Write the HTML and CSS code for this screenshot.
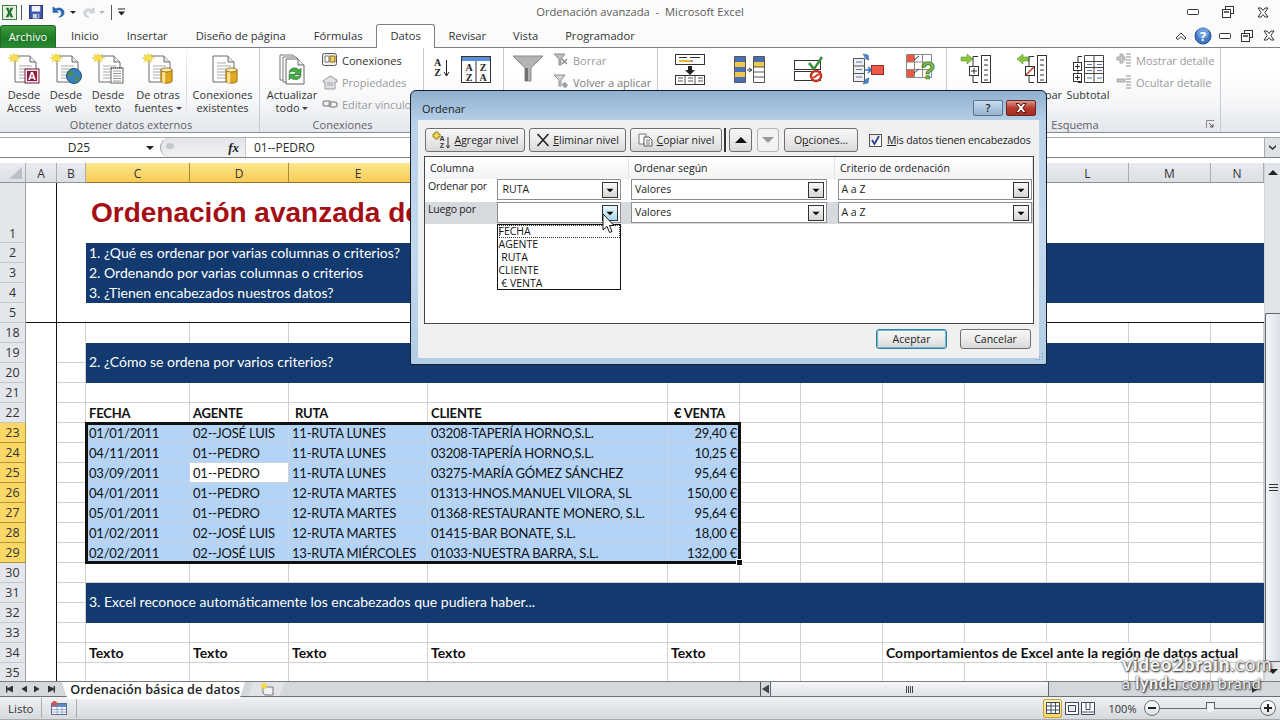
FILE: index.html
```html
<!DOCTYPE html>
<html lang="es">
<head>
    <meta charset="UTF-8">
    <title>Ordenación avanzada - Microsoft Excel</title>
    <link rel="stylesheet" href="styles.css">
</head>
<body>

<!-- Shared icon parts -->
<svg class="defs" width="0" height="0">
    <defs>
        <symbol id="doc" viewBox="0 0 32 32">
            <path d="M7 3h15l6 6v20H7z" fill="#fff" stroke="#6b6b6b"/>
            <path d="M22 3v6h6" fill="#e8e8e8" stroke="#6b6b6b"/>
            <path d="M11 13h13M11 16h13M11 19h13M11 22h13M11 25h13" stroke="#a9a9a9"/>
            <path d="M6 0l1 3 3-2-1 3 4 1-4 1 1 3-3-2-1 3-1-3-3 2 1-3-3-1 3-1-1-3 3 2z" fill="#f4e04d" stroke="#e3c84a" stroke-width=".5"/>
        </symbol>
        <symbol id="page" viewBox="0 0 32 32">
            <path d="M6 3h15l6 6v20H6z" fill="#fff" stroke="#6b6b6b"/>
            <path d="M21 3v6h6" fill="#e8e8e8" stroke="#6b6b6b"/>
            <path d="M10 10h9M10 13h14M10 16h14M10 19h14M10 22h14M10 25h14" stroke="#a9a9a9"/>
        </symbol>
        <symbol id="db" viewBox="0 0 14 18">
            <path d="M1 3v12c0 3 12 3 12 0V3z" fill="#e3a91e" stroke="#8f6a10"/>
            <path d="M4 4v13" stroke="#f8e6a0" stroke-width="3"/>
            <ellipse cx="7" cy="3" rx="6" ry="2.2" fill="#f7e9b3" stroke="#8f6a10"/>
        </symbol>
        <symbol id="combo-arrow" viewBox="0 0 16 16">
            <path d="M4 6.500h8L8 10.500z" fill="#000"/>
        </symbol>
    </defs>
</svg>

<div class="app">

    <!-- Title bar -->
    <div class="titlebar">
        <div class="qat">
            <svg class="qat-logo" viewBox="0 0 16 16"><rect x=".5" y=".5" width="15" height="15" fill="#e6f1df" stroke="#2f7a3a"/><path d="M4 3h3l1 3 1-3h3l-2.500 5L12 13H9L8 10l-1 3H4l2.500-5z" fill="#1f6e2e"/></svg>
            <span class="qat-sep"></span>
            <svg class="qat-save" viewBox="0 0 15 15"><path d="M.5.500h14v14H.5z" fill="#3d54a8" stroke="#1e2a66"/><rect x="3" y="1" width="9" height="6" fill="#eef2fb"/><rect x="4" y="9.500" width="7" height="5" fill="#c9d0e4"/><rect x="8.500" y="10" width="1.500" height="3.500" fill="#3d54a8"/></svg>
            <svg class="qat-undo" viewBox="0 0 15 15"><path d="M1 2v6h6L5 6c3-1.500 5 0 5 3 0 2-1 3-3 4 4 0 6-2 6-5 0-4-5-6-9-4z" fill="#2d6cc0" stroke="#1b4a8c" stroke-width=".5"/></svg>
            <span class="qat-drop"></span>
            <svg class="qat-redo" viewBox="0 0 15 15"><path d="M14 2v6H8l2-2C7 4.500 5 6 5 9c0 2 1 3 3 4-4 0-6-2-6-5 0-4 5-6 9-4z" fill="#d5dbdf" stroke="#a7aeb2" stroke-width=".5"/></svg>
            <span class="qat-drop is-off"></span>
            <span class="qat-sep is-far"></span>
            <svg class="qat-custom" viewBox="0 0 9 8"><path d="M1 1h7" stroke="#222"/><path d="M1 3.500h7L4.500 7.500z" fill="#222"/></svg>
        </div>
        <div class="title-text">Ordenación avanzada  -  Microsoft Excel</div>
        <div class="win-buttons">
            <button class="win-btn"><svg width="12" height="6" viewBox="0 0 12 6"><rect x=".5" y=".5" width="11" height="5" rx="1" fill="#fff" stroke="#333"/></svg></button>
            <button class="win-btn"><svg width="12" height="12" viewBox="0 0 12 12"><rect x="3.500" y=".5" width="8" height="7" fill="#fff" stroke="#333"/><rect x=".5" y="3.500" width="8" height="8" fill="#fff" stroke="#333"/><path d="M2 6h5" stroke="#333" stroke-width="1.500"/></svg></button>
            <button class="win-btn"><svg width="12" height="11" viewBox="0 0 12 11"><path d="M1 1h3l2 2.500L8 1h3L7.800 5.500 11 10H8L6 7.500 4 10H1l3.200-4.500z" fill="#fff" stroke="#333"/></svg></button>
        </div>
    </div>

    <!-- Ribbon tabs -->
    <div class="tabs">
        <div class="tab-file">Archivo</div>
        <div class="tab">Inicio</div>
        <div class="tab">Insertar</div>
        <div class="tab">Diseño de página</div>
        <div class="tab">Fórmulas</div>
        <div class="tab is-active">Datos</div>
        <div class="tab">Revisar</div>
        <div class="tab">Vista</div>
        <div class="tab">Programador</div>
        <div class="doc-buttons">
            <button class="doc-btn"><svg width="12" height="8" viewBox="0 0 12 8"><path d="M1 6l5-5 5 5-2 1.500-3-3-3 3z" fill="#fff" stroke="#333"/></svg></button>
            <button class="doc-btn"><svg width="18" height="18" viewBox="0 0 18 18"><circle cx="9" cy="9" r="8" fill="#3f78c8" stroke="#24508f"/><circle cx="9" cy="6" r="6" fill="#8db5e8" opacity=".6"/><text x="9" y="13.500" class="help-mark">?</text></svg></button>
            <button class="doc-btn"><svg width="12" height="6" viewBox="0 0 12 6"><rect x=".5" y=".5" width="11" height="5" rx="1" fill="#fff" stroke="#333"/></svg></button>
            <button class="doc-btn"><svg width="12" height="12" viewBox="0 0 12 12"><rect x="3.500" y=".5" width="8" height="7" fill="#fff" stroke="#333"/><rect x=".5" y="3.500" width="8" height="8" fill="#fff" stroke="#333"/><path d="M2 6h5" stroke="#333" stroke-width="1.500"/></svg></button>
            <button class="doc-btn"><svg width="12" height="11" viewBox="0 0 12 11"><path d="M1 1h3l2 2.500L8 1h3L7.800 5.500 11 10H8L6 7.500 4 10H1l3.200-4.500z" fill="#fff" stroke="#333"/></svg></button>
        </div>
    </div>

    <!-- Ribbon -->
    <div class="ribbon">
        <div class="group g-external">
            <div class="group-items">
                <div class="big w42">
                    <svg class="big-icon" viewBox="0 0 32 32"><use href="#doc"/><rect x="17" y="16" width="14" height="14" fill="#fbe9ee" stroke="#7b1c38"/><rect x="19" y="18" width="10" height="10" fill="#8a1c40"/><text x="24" y="27" class="icon-letter">A</text></svg>
                    <div class="big-label">Desde<br>Access</div>
                </div>
                <div class="big w42">
                    <svg class="big-icon" viewBox="0 0 32 32"><use href="#doc"/><circle cx="24" cy="23" r="7.500" fill="#3b7fb8" stroke="#1e5480"/><path d="M20 18c3-1 4 1 3 3s-4 3-5 1zM26 24c2-1 4 0 3 2s-3 3-4 2z" fill="#4e8f3e"/></svg>
                    <div class="big-label">Desde<br>web</div>
                </div>
                <div class="big w42">
                    <svg class="big-icon" viewBox="0 0 32 32"><use href="#doc"/><rect x="19" y="15" width="12" height="15" fill="#fff" stroke="#666"/><path d="M19 15h12" stroke="#333" stroke-dasharray="1 1"/><path d="M21 18h8M21 20.500h8M21 23h8M21 25.500h8M21 28h8" stroke="#999"/></svg>
                    <div class="big-label">Desde<br>texto</div>
                </div>
                <div class="big w58">
                    <svg class="big-icon" viewBox="0 0 32 32"><use href="#doc"/><use href="#db" x="18" y="14" width="13" height="17"/></svg>
                    <div class="big-label">De otras<br>fuentes <span class="caret"></span></div>
                </div>
                <span class="inner-sep"></span>
                <div class="big w71">
                    <svg class="big-icon" viewBox="0 0 32 32"><use href="#page"/><use href="#db" x="18" y="14" width="13" height="17"/></svg>
                    <div class="big-label">Conexiones<br>existentes</div>
                </div>
            </div>
            <div class="group-label">Obtener datos externos</div>
        </div>

        <div class="group g-connections">
            <div class="group-items">
                <div class="big w60">
                    <svg class="big-icon" viewBox="0 0 32 32"><path d="M4 2h13l5 5v20H4z" fill="#fff" stroke="#777"/><path d="M7 4h13l5 5v20H7z" fill="#fff" stroke="#777"/><path d="M10 6h12l6 6v19H10z" fill="#fff" stroke="#666"/><path d="M22 6v6h6" fill="#eee" stroke="#666"/><path d="M13 20c0-5 7-7 10-3l2-2v7h-7l2-2c-2-2-4-2-7 0z" fill="#46a846" stroke="#22702a" stroke-width=".5"/><path d="M25 22c0 5-7 6-10 3l-2 2v-6h7l-2 2c2 1 4 1 7-1z" fill="#46a846" stroke="#22702a" stroke-width=".5"/></svg>
                    <div class="big-label">Actualizar<br>todo <span class="caret"></span></div>
                </div>
                <div class="small-col">
                    <div class="small"><svg class="small-icon" viewBox="0 0 16 16"><rect x=".5" y="1.500" width="14" height="12" rx="2" fill="#eef1f6" stroke="#555"/><path d="M3 4h4v6H3z" fill="#fff" stroke="#777"/><path d="M8 4h5v6H8z" fill="#f0cc6a" stroke="#8f6a10"/></svg>Conexiones</div>
                    <div class="small is-off"><svg class="small-icon" viewBox="0 0 16 16"><path d="M1 7l7-5 7 4v2h-2v7H3V8H1z" fill="#dfe1e4" stroke="#9a9a9a"/><path d="M5 9h6M5 11h6" stroke="#a5a5a5"/></svg>Propiedades</div>
                    <div class="small is-off"><svg class="small-icon" viewBox="0 0 16 16"><rect x="1" y="5" width="8" height="5" rx="2.500" fill="none" stroke="#9a9a9a" stroke-width="1.500"/><rect x="7" y="6" width="8" height="5" rx="2.500" fill="none" stroke="#9a9a9a" stroke-width="1.500"/></svg>Editar vínculos</div>
                </div>
            </div>
            <div class="group-label">Conexiones</div>
        </div>

        <div class="group g-sort">
            <div class="group-items">
                <svg class="sort-az" viewBox="0 0 18 22"><text x="4.500" y="9" class="icon-serif">A</text><text x="4.500" y="19" class="icon-serif">Z</text><path d="M13.500 3v15M11 15l2.500 4 2.500-4" fill="none" stroke="#222"/></svg>
                <svg class="sort-big" viewBox="0 0 30 27"><rect x=".5" y=".5" width="29" height="26" fill="#fff" stroke="#333"/><rect x="1" y="1" width="28" height="4" fill="#5b8fd6"/><path d="M15 5v21" stroke="#333"/><text x="8" y="15" class="icon-serif">A</text><text x="8" y="24.500" class="icon-serif">Z</text><text x="22" y="15" class="icon-serif">Z</text><text x="22" y="24.500" class="icon-serif">A</text></svg>
            </div>
        </div>

        <div class="group g-filter">
            <div class="group-items">
                <svg class="funnel" viewBox="0 0 32 28"><path d="M1 2h30L19 14v13h-6V14z" fill="#b3b3b3" stroke="#8b8b8b"/><path d="M13 14h3v13h-3z" fill="#707070"/></svg>
                <div class="small-col">
                    <div class="small is-off"><svg class="small-icon" viewBox="0 0 16 16"><path d="M1 2h11L8 7v6H6V7z" fill="#bdbdbd" stroke="#8d8d8d"/><path d="M9 7l5 5M14 7l-5 5" stroke="#8d8d8d" stroke-width="1.500"/></svg>Borrar</div>
                    <div class="small is-off is-dim"><svg class="small-icon" viewBox="0 0 16 16"><path d="M1 1h11L8 6v6H6V6z" fill="#d6d6d6" stroke="#8d8d8d"/><path d="M9 10l3-2 3 3-2 3-3-1z" fill="#9aa0a5"/></svg>Volver a aplicar</div>
                </div>
            </div>
        </div>

        <div class="group g-tools">
            <div class="group-items">
                <div class="big w59"><svg class="big-icon" viewBox="0 0 32 32"><rect x="1.500" y="1.500" width="29" height="10" fill="#fff" stroke="#333"/><path d="M5 4.500h8M16 4.500h10M5 8h14" stroke="#333"/><path d="M5 8h12" stroke="#e8b92e" stroke-width="2"/><path d="M14 13h4v4h3l-5 5-5-5h3z" fill="#222"/><rect x="1.500" y="22.500" width="29" height="9" fill="#fff" stroke="#333"/><path d="M11 23v8M21 23v8M4 25h5M14 25h5M24 25h5M4 28h5M14 28h5M24 28h5" stroke="#555"/></svg></div>
                <div class="big w59"><svg class="big-icon" viewBox="0 0 32 32"><path d="M1.500 3.500h11v26h-11zM20.500 3.500h11v26h-11z" fill="#fff" stroke="#555"/><path d="M2 4h10v5H2zM21 4h10v5H21z" fill="#4a6fb5"/><path d="M2 9h10v5H2zM2 19h10v5H2zM21 9h10v5H21z" fill="#efc94c"/><path d="M2 14h10v5H2zM2 24h10v5H2z" fill="#4a6fb5"/><path d="M14 17h4M16 15l3 2-3 2" fill="none" stroke="#333"/><path d="M21 14h10M21 19h10M21 24h10" stroke="#555"/></svg></div>
                <div class="big w59"><svg class="big-icon" viewBox="0 0 32 32"><rect x="2.500" y="7.500" width="26" height="9" fill="#fff" stroke="#333"/><rect x="2.500" y="18.500" width="26" height="9" fill="#fff" stroke="#333"/><path d="M18 9l4 5 7-11 2 2-9 13-6-7z" fill="#3a8f3e"/><circle cx="24" cy="23" r="5" fill="#fff" stroke="#c8311f" stroke-width="2.500"/><path d="M21 25l6-4" stroke="#c8311f" stroke-width="2"/></svg></div>
                <div class="big w62"><svg class="big-icon" viewBox="0 0 32 32"><path d="M1.500 5.500h11v23h-11z" fill="#eee" stroke="#555"/><path d="M1.500 13h11M1.500 20.500h11" stroke="#555"/><path d="M4 9h6M4 16.500h6M4 24h6" stroke="#5a78b8"/><rect x="19.500" y="12.500" width="12" height="9" fill="#ef5a48" stroke="#9a2a1e"/><path d="M13 17h6M16 14l3 3-3 3" fill="none" stroke="#3c6fb8" stroke-width="1.500"/><path d="M11 1l5 1 1 5-3-1zM11 31l5-1 1-5-3 1z" fill="#4a86d0" stroke="#28568f" stroke-width=".5"/></svg></div>
                <div class="big w44"><svg class="big-icon" viewBox="0 0 32 32"><path d="M1.500 1.500h25v23h-25zM1.500 9h25M1.500 16.500h25M9.500 1.500v23M17.500 1.500v23" fill="#fff" stroke="#888"/><path d="M2 2h7v7H2zM2 17h7v7H2z" fill="#e85a46"/><path d="M9 7l5-4M9 20l5-4" stroke="#333"/><text x="23" y="26" class="icon-question">?</text></svg></div>
            </div>
        </div>

        <div class="group g-outline">
            <div class="group-items">
                <div class="big w56">
                    <svg class="big-icon" viewBox="0 0 32 32"><path d="M1 4h6V1l6 5-6 5V8H1z" fill="#8cc63f" stroke="#4e8a1d" stroke-width=".5"/><path d="M18 3.500h-5v26h5" fill="none" stroke="#333"/><rect x="9.500" y="13.500" width="9" height="9" fill="#fff" stroke="#333"/><path d="M11 18h6M14 15v6" stroke="#333"/><rect x="21.500" y="2.500" width="9" height="27" fill="#fff" stroke="#333"/><path d="M24 7h4M24 12h4M24 17h4M24 22h4M24 27h4" stroke="#333"/></svg>
                    <div class="big-label">Agrupar</div>
                </div>
                <div class="big w56">
                    <svg class="big-icon" viewBox="0 0 32 32"><path d="M13 4H7V1L1 6l6 5V8h6z" fill="#8cc63f" stroke="#4e8a1d" stroke-width=".5"/><path d="M18 3.500h-5v26h5" fill="none" stroke="#333"/><rect x="9.500" y="13.500" width="9" height="9" fill="#fff" stroke="#333"/><path d="M10 22l8-8" stroke="#c8311f" stroke-width="1.500"/><rect x="21.500" y="2.500" width="9" height="27" fill="#fff" stroke="#333"/><path d="M24 7h4M24 12h4M24 17h4M24 22h4M24 27h4" stroke="#333"/></svg>
                    <div class="big-label">Desagrupar</div>
                </div>
                <div class="big w56">
                    <svg class="big-icon" viewBox="0 0 32 32"><path d="M6 3.500h4M6 29.500h4M6 3.500v26" fill="none" stroke="#333"/><rect x="1.500" y="9.500" width="8" height="8" fill="#fff" stroke="#333"/><rect x="1.500" y="20.500" width="8" height="8" fill="#fff" stroke="#333"/><path d="M3 13.500h5M5.500 11v5M3 24.500h5M5.500 22v5" stroke="#333"/><path d="M12.500 2.500h19v27h-19zM12.500 8.500h19M12.500 14.500h19M12.500 20.500h19M22 2.500v27" fill="#fff" stroke="#444"/><path d="M15 11.500h5M25 11.500h5M15 17.500h5M25 17.500h5M15 25h5M25 25h5" stroke="#5a78b8"/></svg>
                    <div class="big-label">Subtotal</div>
                </div>
                <div class="small-col">
                    <div class="small is-off"><svg class="small-icon" viewBox="0 0 16 16"><path d="M1 5h3V2h3v3h2v3H7v3H4V8H1z" fill="#c7c7c7" stroke="#a8a8a8"/><path d="M10 2h5M10 5h5M10 8h5M10 11h5M10 14h5" stroke="#8f8f8f"/></svg>Mostrar detalle</div>
                    <div class="small is-off"><svg class="small-icon" viewBox="0 0 16 16"><path d="M1 5h8v3H1z" fill="#c7c7c7" stroke="#a8a8a8"/><path d="M10 2h5M10 5h5M10 8h5M10 11h5M10 14h5" stroke="#8f8f8f"/></svg>Ocultar detalle</div>
                </div>
            </div>
            <div class="group-label">Esquema</div>
            <svg class="launcher" viewBox="0 0 9 9"><path d="M.5 8V.5H8" fill="none" stroke="#888"/><path d="M3 3l4 4M7 4v3H4" fill="none" stroke="#555"/></svg>
        </div>
    </div>

    <!-- Formula bar -->
    <div class="formula-bar">
        <div class="name-box">D25<span class="name-arrow"></span></div>
        <div class="fx-box"><span class="fx-pill"></span><span class="fx">fx</span></div>
        <div class="formula-input">01--PEDRO</div>
        <div class="formula-expand"><svg width="9" height="7" viewBox="0 0 9 7"><path d="M1 1l3.500 3L8 1v2L4.500 6 1 3z" fill="#333"/></svg></div>
    </div>

    <!-- Sheet -->
    <div class="sheet-area">
        <div class="sheet">
            <table class="grid">
                <colgroup>
                    <col class="c-hd"><col class="c-a"><col class="c-b"><col class="c-c"><col class="c-d"><col class="c-e"><col class="c-f"><col class="c-g"><col class="c-h"><col class="c-i"><col class="c-i"><col class="c-i"><col class="c-i"><col class="c-i"><col class="c-n">
                </colgroup>
                <thead>
                    <tr class="col-heads">
                        <th class="corner"><svg width="14" height="14" viewBox="0 0 14 14"><path d="M14 1v12H1z" fill="#bcc1c8"/></svg></th>
                        <th>A</th><th>B</th><th class="is-sel">C</th><th class="is-sel">D</th><th class="is-sel">E</th><th class="is-sel">F</th><th class="is-sel">G</th><th>H</th><th>I</th><th>J</th><th>K</th><th>L</th><th>M</th><th>N</th>
                    </tr>
                </thead>
                <tbody>
                    <tr class="plain tall"><th>1</th><td class="col-a"></td><td></td><td colspan="12" class="sheet-title">Ordenación avanzada de datos</td></tr>
                    <tr class="plain"><th>2</th><td class="col-a"></td><td></td><td colspan="12" class="band">1. ¿Qué es ordenar por varias columnas o criterios?</td></tr>
                    <tr class="plain"><th>3</th><td class="col-a"></td><td></td><td colspan="12" class="band">2. Ordenando por varias columnas o criterios</td></tr>
                    <tr class="plain"><th>4</th><td class="col-a"></td><td></td><td colspan="12" class="band">3. ¿Tienen encabezados nuestros datos?</td></tr>
                    <tr class="plain freeze"><th>5</th><td class="col-a"></td><td></td><td colspan="12"></td></tr>
                    <tr class="no-bottom"><th>18</th><td class="col-a"></td><td></td><td></td><td></td><td></td><td></td><td></td><td></td><td></td><td></td><td></td><td></td><td></td><td></td></tr>
                    <tr><th>19</th><td class="col-a"></td><td></td><td colspan="12" rowspan="2" class="band is-double">2. ¿Cómo se ordena por varios criterios?</td></tr>
                    <tr><th>20</th><td class="col-a"></td><td></td></tr>
                    <tr><th>21</th><td class="col-a"></td><td></td><td></td><td></td><td></td><td></td><td></td><td></td><td></td><td></td><td></td><td></td><td></td><td></td></tr>
                    <tr class="heads"><th>22</th><td class="col-a"></td><td></td><td>FECHA</td><td>AGENTE</td><td>&nbsp;RUTA</td><td>CLIENTE</td><td>&nbsp;€ VENTA</td><td></td><td></td><td></td><td></td><td></td><td></td><td></td></tr>
                    <tr class="data"><th>23</th><td class="col-a"></td><td></td><td class="s">01/01/2011</td><td class="s">02--JOSÉ LUIS</td><td class="s">11-RUTA LUNES</td><td class="s">03208-TAPERÍA HORNO,S.L.</td><td class="s num">29,40 €</td><td></td><td></td><td></td><td></td><td></td><td></td><td></td></tr>
                    <tr class="data"><th>24</th><td class="col-a"></td><td></td><td class="s">04/11/2011</td><td class="s">01--PEDRO</td><td class="s">11-RUTA LUNES</td><td class="s">03208-TAPERÍA HORNO,S.L.</td><td class="s num">10,25 €</td><td></td><td></td><td></td><td></td><td></td><td></td><td></td></tr>
                    <tr class="data"><th>25</th><td class="col-a"></td><td></td><td class="s">03/09/2011</td><td class="active">01--PEDRO</td><td class="s">11-RUTA LUNES</td><td class="s">03275-MARÍA GÓMEZ SÁNCHEZ</td><td class="s num">95,64 €</td><td></td><td></td><td></td><td></td><td></td><td></td><td></td></tr>
                    <tr class="data"><th>26</th><td class="col-a"></td><td></td><td class="s">04/01/2011</td><td class="s">01--PEDRO</td><td class="s">12-RUTA MARTES</td><td class="s">01313-HNOS.MANUEL VILORA, SL</td><td class="s num">150,00 €</td><td></td><td></td><td></td><td></td><td></td><td></td><td></td></tr>
                    <tr class="data"><th>27</th><td class="col-a"></td><td></td><td class="s">05/01/2011</td><td class="s">01--PEDRO</td><td class="s">12-RUTA MARTES</td><td class="s">01368-RESTAURANTE MONERO, S.L.</td><td class="s num">95,64 €</td><td></td><td></td><td></td><td></td><td></td><td></td><td></td></tr>
                    <tr class="data"><th>28</th><td class="col-a"></td><td></td><td class="s">01/02/2011</td><td class="s">02--JOSÉ LUIS</td><td class="s">12-RUTA MARTES</td><td class="s">01415-BAR BONATE, S.L.</td><td class="s num">18,00 €</td><td></td><td></td><td></td><td></td><td></td><td></td><td></td></tr>
                    <tr class="data"><th>29</th><td class="col-a"></td><td></td><td class="s">02/02/2011</td><td class="s">02--JOSÉ LUIS</td><td class="s">13-RUTA MIÉRCOLES</td><td class="s">01033-NUESTRA BARRA, S.L.</td><td class="s num">132,00 €</td><td></td><td></td><td></td><td></td><td></td><td></td><td></td></tr>
                    <tr><th>30</th><td class="col-a"></td><td></td><td></td><td></td><td></td><td></td><td></td><td></td><td></td><td></td><td></td><td></td><td></td><td></td></tr>
                    <tr><th>31</th><td class="col-a"></td><td></td><td colspan="12" rowspan="2" class="band is-double">3. Excel reconoce automáticamente los encabezados que pudiera haber...</td></tr>
                    <tr><th>32</th><td class="col-a"></td><td></td></tr>
                    <tr><th>33</th><td class="col-a"></td><td></td><td></td><td></td><td></td><td></td><td></td><td></td><td></td><td></td><td></td><td></td><td></td><td></td></tr>
                    <tr class="heads is-mixed"><th>34</th><td class="col-a"></td><td></td><td>Texto</td><td>Texto</td><td>Texto</td><td>Texto</td><td>Texto</td><td></td><td></td><td colspan="5" class="note">Comportamientos de Excel ante la región de datos actual</td></tr>
                    <tr><th>35</th><td class="col-a"></td><td></td><td></td><td></td><td></td><td></td><td></td><td></td><td></td><td></td><td></td><td></td><td></td><td></td></tr>
                </tbody>
            </table>
            <div class="sel-box"><span class="sel-handle"></span></div>
        </div>
        <div class="vscroll">
            <div class="scroll-up"></div>
            <div class="vthumb"><span class="grip-h"></span></div>
            <div class="scroll-down"></div>
        </div>
    </div>

    <!-- Sheet tabs -->
    <div class="sheet-tabs">
        <div class="tab-nav">
            <span class="nav first"></span><span class="nav prev"></span><span class="nav next"></span><span class="nav last"></span>
        </div>
        <div class="sheet-tab">Ordenación básica de datos</div>
        <div class="new-tab"><svg width="16" height="14" viewBox="0 0 16 14"><path d="M4 5h10v8H6l-2-2z" fill="#eef1f6" stroke="#777"/><path d="M5 0l1 2 2-1-1 2 2 1-2 1 1 2-2-1-1 2-1-2-2 1 1-2-2-1 2-1-1-2 2 1z" fill="#f4d94a"/></svg></div>
        <div class="tab-split"></div>
        <div class="hscroll">
            <span class="hleft"></span>
            <div class="hthumb"><span class="grip-v"></span></div>
            <span class="hright"></span>
        </div>
    </div>

    <!-- Status bar -->
    <div class="statusbar">
        <div class="status-text">Listo</div>
        <span class="status-sep"></span>
        <div class="status-macro"><svg width="16" height="14" viewBox="0 0 16 14"><rect x=".5" y="2.500" width="15" height="11" fill="#fff" stroke="#5b6f8c"/><rect x="1" y="3" width="14" height="3" fill="#5f8ac4"/><path d="M1 8.500h14M1 11h14M6 6v7M11 6v7" stroke="#8fa6c4"/><circle cx="3.500" cy="2.500" r="2.500" fill="#d9534a"/></svg></div>
        <span class="status-sep"></span>
        <div class="status-right">
            <span class="view is-on"><svg width="14" height="12" viewBox="0 0 14 12"><path d="M.5.500h13v11H.5zM.5 4h13M.5 8h13M5 .5v11M9.500.5v11" fill="#fff" stroke="#3e4a5c"/></svg></span>
            <span class="view"><svg width="14" height="13" viewBox="0 0 14 13"><rect x=".5" y=".5" width="13" height="12" fill="#fff" stroke="#3e4a5c"/><rect x="3.500" y="3.500" width="7" height="6" fill="#e7eaf0" stroke="#3e4a5c"/></svg></span>
            <span class="view"><svg width="14" height="13" viewBox="0 0 14 13"><path d="M.5.500h13v12H.5z" fill="#fff" stroke="#3e4a5c"/><path d="M5 .5v7h4V.5M.5 10h13" fill="none" stroke="#3e4a5c"/></svg></span>
            <span class="zoom-val">100%</span>
            <span class="zoom-btn"><span class="zoom-minus"></span></span>
            <div class="slider"><span class="slider-thumb"></span></div>
            <span class="zoom-btn"><span class="zoom-minus"></span><span class="zoom-vert"></span></span>
        </div>
    </div>

    <!-- Sort dialog -->
    <div class="dialog">
        <div class="dialog-title">
            <span>Ordenar</span>
            <div class="dialog-win">
                <button class="dlg-help">?</button>
                <button class="dlg-close"><svg width="14" height="10" viewBox="0 0 14 10"><path d="M2 .5h3l2 2.500L9 .5h3L8.800 5 12 9.500H9L7 7 5 9.500H2L5.200 5z" fill="#fff" stroke="#5a1a14"/></svg></button>
            </div>
        </div>
        <div class="dialog-body">
            <div class="dlg-toolbar">
                <button class="btn w-add"><svg width="20" height="18" viewBox="0 0 20 18"><path d="M3 1h3v2h2v3H6v2H3V6H1V3h2z" fill="#f4dc5a" stroke="#9a8420"/><text x="10" y="10" class="mini-az">A</text><text x="10" y="17" class="mini-az">Z</text><path d="M16 6v11M14.500 14.500l1.500 2.500 1.500-2.500" fill="none" stroke="#333"/></svg><span><u>A</u>gregar nivel</span></button>
                <button class="btn w-del"><svg width="14" height="14" viewBox="0 0 14 14"><path d="M1.500 1l11 12M12.500 1l-11 12" stroke="#222" stroke-width="1.600"/></svg><span><u>E</u>liminar nivel</span></button>
                <button class="btn w-copy"><svg width="16" height="14" viewBox="0 0 16 14"><path d="M1 1h7v10H1z" fill="#fff" stroke="#777"/><path d="M6 4h5l3 3v6H6z" fill="#fff" stroke="#555"/><path d="M8 7h4M8 9h4M8 11h4" stroke="#777"/></svg><span><u>C</u>opiar nivel</span></button>
                <span class="tool-sep"></span>
                <button class="btn w-up"><span class="tri-up"></span></button>
                <button class="btn w-down is-off"><span class="tri-down"></span></button>
                <button class="btn w-opt"><span>O<u>p</u>ciones...</span></button>
                <label class="has-head"><span class="check"><svg width="11" height="11" viewBox="0 0 11 11"><path d="M2 5l2.500 4L9 1" fill="none" stroke="#27408b" stroke-width="1.800"/></svg></span><span><u>M</u>is datos tienen encabezados</span></label>
            </div>

            <div class="levels">
                <div class="levels-head">
                    <div>Columna</div>
                    <div>Ordenar según</div>
                    <div>Criterio de ordenación</div>
                </div>
                <div class="level">
                    <div class="level-label">Ordenar por</div>
                    <div class="combo"><span class="combo-text">RUTA</span><span class="combo-btn"><svg width="14" height="14"><use href="#combo-arrow"/></svg></span></div>
                    <div class="combo is-tight"><span class="combo-text">Valores</span><span class="combo-btn"><svg width="14" height="14"><use href="#combo-arrow"/></svg></span></div>
                    <div class="combo is-tight"><span class="combo-text">A a Z</span><span class="combo-btn"><svg width="14" height="14"><use href="#combo-arrow"/></svg></span></div>
                </div>
                <div class="level is-selected">
                    <div class="level-label">Luego por</div>
                    <div class="combo is-open">
                        <span class="combo-text"></span><span class="combo-btn is-hover"><svg width="14" height="14"><use href="#combo-arrow"/></svg></span>
                        <div class="combo-list">
                            <div class="is-focus">FECHA</div>
                            <div>AGENTE</div>
                            <div>&nbsp;RUTA</div>
                            <div>CLIENTE</div>
                            <div>&nbsp;€ VENTA</div>
                        </div>
                    </div>
                    <div class="combo is-tight"><span class="combo-text">Valores</span><span class="combo-btn"><svg width="14" height="14"><use href="#combo-arrow"/></svg></span></div>
                    <div class="combo is-tight"><span class="combo-text">A a Z</span><span class="combo-btn"><svg width="14" height="14"><use href="#combo-arrow"/></svg></span></div>
                </div>
            </div>

            <div class="dlg-actions">
                <button class="btn btn-action is-default">Aceptar</button>
                <button class="btn btn-action">Cancelar</button>
            </div>
            <svg class="size-grip" width="10" height="10" viewBox="0 0 10 10"><path d="M8 1h1v1H8zM5 4h1v1H5zM8 4h1v1H8zM2 7h1v1H2zM5 7h1v1H5zM8 7h1v1H8z" fill="#8a96a5"/></svg>
        </div>
    </div>

    <!-- Mouse pointer -->
    <svg class="pointer" width="13" height="21" viewBox="0 0 13 21"><path d="M1 1v16l4-3.500 2.500 6 2.500-1-2.500-6H12z" fill="#fff" stroke="#111"/></svg>

    <!-- Video watermark -->
    <div class="watermark">
        <div class="wm-top"><b>video2brain</b>.com</div>
        <div class="wm-bottom">a <b>lynda</b>.com brand</div>
    </div>
</div>

</body>
</html>
```

FILE: styles.css
```css
* {
    box-sizing: border-box;
}
html, body {
    margin: 0;
    height: 100%;
    overflow: hidden;
    background-color: #fff;
}
body {
    font-family: 'Open Sans', 'Liberation Sans', sans-serif;
    font-size: 11px;
    color: #2b2b2b;
}
button {
    font: inherit;
    color: inherit;
    padding: 0;
}
.defs {
    position: absolute;
}
.app {
    position: relative;
    width: 1280px;
    height: 720px;
    display: flex;
    flex-direction: column;
    overflow: hidden;
}

/* Title bar */
.titlebar {
    height: 24px;
    flex: none;
    display: grid;
    grid-template-columns: 1fr auto 1fr;
    align-items: center;
    background-color: #fbfbfc;
}
.qat {
    display: flex;
    align-items: center;
    padding-left: 2px;
}
.qat-logo {
    width: 15px;
    height: 15px;
}
.qat-sep {
    width: 1px;
    height: 15px;
    margin: 0 7px 0 4px;
    background-color: #555;
}
.qat-sep.is-far {
    margin: 0 5px 0 6px;
}
.qat-save {
    width: 14px;
    height: 14px;
}
.qat-undo {
    width: 14px;
    height: 14px;
    margin-left: 9px;
}
.qat-redo {
    width: 13px;
    height: 13px;
    margin-left: 6px;
}
.qat-drop {
    width: 0;
    height: 0;
    margin-left: 4px;
    border-left: 3px solid transparent;
    border-right: 3px solid transparent;
    border-top: 3px solid #222;
}
.qat-drop.is-off {
    border-top-color: #b5b5b5;
}
.qat-custom {
    width: 9px;
    height: 8px;
}
.title-text {
    font-size: 11.2px;
    color: #5b5b5b;
    white-space: pre;
    padding-bottom: 2px;
}
.win-buttons {
    display: flex;
    justify-content: flex-end;
}
.win-btn {
    width: 35px;
    height: 22px;
    border: none;
    background: none;
    display: flex;
    align-items: center;
    justify-content: center;
}

/* Ribbon tabs */
.tabs {
    height: 24px;
    flex: none;
    display: flex;
    align-items: flex-end;
    position: relative;
    background-color: #fbfbfc;
    border-bottom: 1px solid #7d7f82;
}
.tab-file {
    width: 56px;
    height: 23px;
    margin-bottom: -1px;
    border-radius: 3px 3px 0 0;
    border: 1px solid #1f6a29;
    border-bottom: none;
    background: linear-gradient(#3f9a3f, #1f7a25 55%, #2f8a35);
    color: #fff;
    font-size: 11px;
    text-align: center;
    line-height: 21px;
}
.tab {
    height: 23px;
    margin-bottom: -1px;
    padding: 0 13px;
    border: 1px solid transparent;
    border-bottom: none;
    font-size: 11.2px;
    line-height: 20px;
    color: #333;
}
.tab-file + .tab {
    margin-left: 1px;
}
.tab.is-active {
    background-color: #fff;
    border-color: #7d7f82;
    border-radius: 3px 3px 0 0;
    height: 24px;
    line-height: 21px;
}
.tab.is-active ~ .tab {
    padding: 0 12.5px;
}
.doc-buttons {
    margin-left: auto;
    height: 23px;
    display: flex;
}
.doc-btn {
    width: 22px;
    border: none;
    background: none;
    display: flex;
    align-items: center;
    justify-content: center;
}
.help-mark {
    font: bold 13px 'Open Sans', sans-serif;
    fill: #fff;
    text-anchor: middle;
}

/* Ribbon */
.ribbon {
    height: 85px;
    flex: none;
    display: flex;
    background: linear-gradient(#ffffff 30%, #f5f6f8 65%, #e4e7ec);
    border-bottom: 1px solid #8a8d91;
}
.group {
    display: flex;
    flex-direction: column;
    border-right: 1px solid #c6c9ce;
    position: relative;
}
.g-external { width: 260px; padding-left: 3px; }
.g-connections { width: 164px; padding-left: 2px; }
.g-sort { width: 80px; }
.g-filter { width: 154px; }
.g-tools { width: 289px; padding-left: 2px; }
.g-outline { width: 274px; padding-left: 1px; }
.group-items {
    flex: 1;
    display: flex;
    min-height: 0;
}
.group-label {
    height: 15px;
    flex: none;
    text-align: center;
    font-size: 11px;
    line-height: 15px;
    color: #5e6166;
}
.g-outline .group-label {
    padding-right: 18px;
}
.launcher {
    position: absolute;
    right: 5px;
    bottom: 3px;
    width: 9px;
    height: 9px;
}
.big {
    flex: none;
    display: flex;
    flex-direction: column;
    align-items: center;
    padding-top: 5px;
}
.w42 { width: 42px; }
.w44 { width: 44px; }
.w56 { width: 56px; }
.w58 { width: 58px; }
.w59 { width: 59px; }
.w60 { width: 60px; }
.w62 { width: 62px; }
.w71 { width: 71px; }
.big-icon {
    width: 32px;
    height: 32px;
    overflow: visible;
}
.big-label {
    margin-top: 3px;
    text-align: center;
    font-size: 11px;
    line-height: 13px;
    white-space: nowrap;
    color: #333;
}
.caret {
    display: inline-block;
    vertical-align: 2px;
    border-left: 3px solid transparent;
    border-right: 3px solid transparent;
    border-top: 3px solid #444;
}
.inner-sep {
    width: 1px;
    height: 76px;
    margin: 2px 0 0 -1px;
    background: linear-gradient(#f1f2f4, #d5d7db 50%, #f1f2f4);
}
.small-col {
    padding-top: 1px;
    flex: none;
}
.small {
    height: 22px;
    display: flex;
    align-items: center;
    gap: 4px;
    white-space: nowrap;
    color: #333;
}
.small.is-off {
    color: #9a9a9a;
}
.small.is-dim {
    color: #7d7d7d;
}
.small-icon {
    width: 16px;
    height: 16px;
    flex: none;
}
.icon-letter {
    font: bold 11px 'Liberation Sans', sans-serif;
    fill: #fff;
    text-anchor: middle;
}
.icon-serif {
    font: bold 10px 'Liberation Serif', serif;
    fill: #222;
    text-anchor: middle;
}
.icon-question {
    font: bold 24px 'Liberation Sans', sans-serif;
    fill: #7cc24a;
    stroke: #2d6b22;
    stroke-width: .7px;
    text-anchor: middle;
}
.sort-az {
    width: 18px;
    height: 22px;
    margin: 9px 0 0 9px;
}
.sort-big {
    width: 30px;
    height: 27px;
    margin: 8px 0 0 10px;
}
.funnel {
    width: 32px;
    height: 28px;
    margin: 6px 9px 0 8px;
}
.mini-az {
    font: bold 7px 'Liberation Sans', sans-serif;
    fill: #333;
    text-anchor: middle;
}

/* Formula bar */
.formula-bar {
    height: 21px;
    flex: none;
    margin-top: 4px;
    display: flex;
    background-color: #fff;
    border-top: 1px solid #a9abaf;
    border-bottom: 1px solid #7d7f82;
}
.name-box {
    width: 160px;
    position: relative;
    text-align: center;
    font-size: 12px;
    line-height: 20px;
    padding-right: 2px;
}
.name-arrow {
    position: absolute;
    right: 6px;
    top: 8px;
    border-left: 4px solid transparent;
    border-right: 4px solid transparent;
    border-top: 4px solid #222;
}
.fx-box {
    width: 85px;
    position: relative;
    background: linear-gradient(#e3e5e9, #f0f1f3);
    border-radius: 10px 0 0 10px;
    border-left: 1px solid #9a9da2;
}
.fx-pill {
    position: absolute;
    left: 5px;
    top: 5px;
    width: 8px;
    height: 6px;
    border-radius: 50%;
    background-color: #c5c8cd;
}
.fx {
    position: absolute;
    right: 6px;
    top: 0;
    font: italic bold 13px 'Liberation Serif', serif;
    line-height: 19px;
    color: #222;
}
.formula-input {
    flex: 1;
    padding-left: 8px;
    font-size: 12px;
    line-height: 20px;
    border-left: 1px solid #c6c9ce;
}
.formula-expand {
    width: 16px;
    background-color: #dfe2e6;
    border-left: 1px solid #a9abaf;
    display: flex;
    align-items: center;
    justify-content: center;
}

/* Sheet */
.sheet-area {
    height: 518px;
    flex: none;
    margin-top: 5px;
    display: flex;
    overflow: hidden;
}
.sheet {
    width: 1264px;
    position: relative;
    overflow: hidden;
}
.grid {
    width: 1264px;
    table-layout: fixed;
    border-collapse: separate;
    border-spacing: 0;
    font-family: Lato, 'Open Sans', sans-serif;
    font-size: 13px;
    color: #111;
    letter-spacing: -.2px;
}
.c-hd { width: 26px; }
.c-a { width: 31px; }
.c-b { width: 29px; }
.c-c { width: 104px; }
.c-d { width: 99px; }
.c-e { width: 139px; }
.c-f { width: 240px; }
.c-g { width: 72px; }
.c-h { width: 61px; }
.c-i { width: 82px; }
.c-n { width: 53px; }
.grid tr {
    height: 20px;
}
.grid tr.tall {
    height: 60px;
}
.grid th {
    padding: 0;
    font-weight: normal;
    font-family: 'Open Sans', sans-serif;
    font-size: 12.5px;
    letter-spacing: 0;
    color: #333;
    background-color: #e3e6eb;
    border-right: 1px solid #9ea3aa;
    border-bottom: 1px solid #c3c7cd;
}
.grid .col-heads th {
    padding-top: 1px;
    font-size: 12px;
    background: linear-gradient(#e9ebef, #dcdfe5);
    border-right: 1px solid #a9adb4;
    border-bottom: 1px solid #8f9399;
}
.grid .col-heads th.is-sel {
    background: linear-gradient(#fbe68f, #f8cc55);
    border-right: 1px solid #a98a33;
    border-bottom: 1px solid #8d7227;
}
.corner {
    text-align: right;
}
.corner svg {
    display: block;
    margin-left: auto;
    margin-right: 3px;
}
.grid td {
    padding: 0 2px 0 3px;
    height: 20px;
    line-height: 18px;
    white-space: nowrap;
    overflow: hidden;
    border-right: 1px solid #d0d0d0;
    border-bottom: 1px solid #d0d0d0;
}
.grid td.col-a {
    padding: 0;
    border-bottom: none;
    border-right: 1px solid #111;
}
.grid .plain td {
    border-bottom: none;
}
.grid .plain td:not(.col-a) {
    border-right: none;
}
.tall th {
    vertical-align: bottom;
}
.grid .freeze td {
    border-bottom: 1px solid #111;
}
.no-bottom td {
    border-bottom-color: transparent;
}
.grid td.sheet-title {
    height: 60px;
    padding-left: 5px;
    font: bold 28px 'Liberation Sans', sans-serif;
    letter-spacing: 0;
    line-height: 34px;
    color: #a50e12;
}
.grid td.band {
    background-color: #123a6e;
    color: #fff;
    font-size: 14px;
    letter-spacing: 0;
    border-right: none;
    border-bottom: none;
}
.grid td.band.is-double {
    padding-bottom: 2px;
}
.heads td {
    font-weight: bold;
}
.is-mixed td {
    font-size: 14px;
    letter-spacing: 0;
}
.data th {
    background: #fad866;
    border-bottom-color: #b3943a;
    border-right-color: #b3943a;
}
.grid td.s {
    background-color: #b3d4f7;
    border-right-color: #c3d6ea;
    border-bottom-color: #c8d3df;
}
.grid td.num {
    text-align: right;
}
.sel-box {
    position: absolute;
    left: 85px;
    top: 259px;
    width: 656px;
    height: 142px;
    border: 3px solid #111;
    pointer-events: none;
}
.sel-handle {
    position: absolute;
    right: -4px;
    bottom: -4px;
    width: 5px;
    height: 5px;
    background-color: #111;
    outline: 1px solid #fff;
}

/* Vertical scrollbar */
.vscroll {
    width: 16px;
    flex: none;
    display: flex;
    flex-direction: column;
    background-color: #e1e4e9;
    border-left: 1px solid #cfd2d7;
}
.scroll-up {
    height: 20px;
    position: relative;
    flex: none;
}
.scroll-up::after {
    content: '';
    position: absolute;
    left: 3px;
    top: 7px;
    border-left: 5px solid transparent;
    border-right: 5px solid transparent;
    border-bottom: 5px solid #222;
}
.vthumb {
    height: 349px;
    margin-top: 130px;
    flex: none;
    display: flex;
    align-items: center;
    justify-content: center;
    background: linear-gradient(90deg, #f5f6f8, #dcdfe6);
    border: 1px solid #5d6672;
    border-right: none;
    border-radius: 2px 0 0 2px;
}
.grip-h {
    width: 9px;
    height: 7px;
    border-top: 1px solid #333;
    border-bottom: 1px solid #333;
    background: linear-gradient(transparent 2px, #333 2px, #333 3px, transparent 3px);
}
.scroll-down {
    flex: 1;
    position: relative;
}
.scroll-down::after {
    content: '';
    position: absolute;
    left: 3px;
    bottom: 7px;
    border-left: 5px solid transparent;
    border-right: 5px solid transparent;
    border-top: 5px solid #222;
}

/* Sheet tabs */
.sheet-tabs {
    height: 16px;
    flex: none;
    display: flex;
    position: relative;
    background-color: #d4d7dc;
    border-top: 1px solid #7d7f82;
    border-bottom: 1px solid #6d6f73;
    font-size: 12.7px;
}
.tab-nav {
    width: 62px;
    display: flex;
    align-items: center;
    gap: 7px;
    padding-left: 6px;
}
.nav {
    width: 7px;
    height: 7px;
    background-color: #333;
}
.nav.first { clip-path: polygon(0 0, 20% 0, 20% 40%, 100% 0, 100% 100%, 20% 60%, 20% 100%, 0 100%); }
.nav.prev { clip-path: polygon(100% 0, 100% 100%, 20% 50%); }
.nav.next { clip-path: polygon(0 0, 0 100%, 80% 50%); }
.nav.last { clip-path: polygon(100% 0, 80% 0, 80% 40%, 0 0, 0 100%, 80% 60%, 80% 100%, 100% 100%); }
.sheet-tab {
    width: 183px;
    height: 17px;
    margin-bottom: -4px;
    padding-left: 3px;
    background-color: #fff;
    font-weight: 600;
    line-height: 15px;
    text-align: center;
    white-space: nowrap;
    color: #222;
    clip-path: polygon(0 0, 100% 0, 97% 100%, 3% 100%);
}
.new-tab {
    width: 37px;
    margin-left: 3px;
    display: flex;
    align-items: center;
    justify-content: center;
    background-color: #e1e3e8;
    clip-path: polygon(15% 0, 100% 0, 85% 100%, 0 100%);
}
.tab-split {
    width: 470px;
}
.hscroll {
    flex: 1;
    display: flex;
    align-items: center;
    position: relative;
    border-left: 1px solid #555;
    margin-left: 5px;
}
.hleft {
    width: 7px;
    height: 9px;
    margin-left: 1px;
    background-color: #444;
    clip-path: polygon(100% 0, 100% 100%, 0 50%);
}
.hthumb {
    width: 279px;
    height: 100%;
    margin-left: 1px;
    display: flex;
    align-items: center;
    justify-content: center;
    background: linear-gradient(#f5f6f8, #dfe2e8);
    border-right: 1px solid #5d6672;
    border-left: 1px solid #5d6672;
}
.grip-v {
    width: 8px;
    height: 7px;
    background: repeating-linear-gradient(90deg, #444 0, #444 1px, transparent 1px, transparent 2px);
}
.hright {
    width: 6px;
    height: 8px;
    margin-left: auto;
    margin-right: 22px;
    background-color: #333;
    clip-path: polygon(0 0, 0 100%, 100% 50%);
}

/* Status bar */
.statusbar {
    height: 23px;
    flex: none;
    display: flex;
    align-items: center;
    padding-right: 4px;
    background: linear-gradient(#eff1f4, #d6d9de);
    border-bottom: 1px solid #a9abaf;
    font-size: 11.5px;
    color: #333;
}
.status-text {
    width: 41px;
    padding-left: 8px;
}
.status-sep {
    width: 1px;
    height: 20px;
    background-color: #a9adb3;
}
.status-macro {
    width: 34px;
    display: flex;
    justify-content: center;
}
.status-right {
    margin-left: auto;
    display: flex;
    align-items: center;
    height: 100%;
}
.view {
    width: 19px;
    height: 19px;
    margin-right: -3px;
    display: flex;
    align-items: center;
    justify-content: center;
}
.view.is-on {
    background: linear-gradient(#fdf0b4, #fbd869);
    border: 1px solid #c9a23a;
    border-radius: 2px;
    margin-right: 0;
}
.zoom-val {
    width: 44px;
    margin-left: 8px;
    padding-right: 3px;
    text-align: center;
    font-size: 11px;
}
.zoom-btn {
    width: 16px;
    height: 16px;
    margin-left: -2px;
    position: relative;
    border: 1px solid #6a6f77;
    border-radius: 50%;
    background: linear-gradient(#fff, #dfe2e7);
}
.zoom-minus {
    position: absolute;
    left: 3px;
    top: 6px;
    width: 8px;
    height: 2px;
    background-color: #222;
}
.zoom-vert {
    position: absolute;
    left: 6px;
    top: 3px;
    width: 2px;
    height: 8px;
    background-color: #222;
}
.slider {
    width: 102px;
    height: 1px;
    position: relative;
    background-color: #6a6f77;
}
.slider-thumb {
    position: absolute;
    left: 46px;
    top: -6px;
    width: 9px;
    height: 12px;
    background-color: #f2f3f5;
    border: 1px solid #5e6167;
    clip-path: polygon(0 0, 100% 0, 100% 60%, 50% 100%, 0 60%);
}

/* Sort dialog */
.dialog {
    position: absolute;
    left: 410px;
    top: 90px;
    width: 637px;
    height: 275px;
    display: flex;
    flex-direction: column;
    padding: 0 7px 6px;
    border: 1px solid #15202c;
    border-radius: 6px 6px 2px 2px;
    background: linear-gradient(#8fb0cf, #b9d2ea 12%, #c2d8ee 60%, #b2cde6);
    font-size: 10.5px;
}
.dialog-title {
    height: 29px;
    flex: none;
    display: flex;
    justify-content: space-between;
    align-items: center;
    padding: 5px 2px 0 4px;
    font-size: 11px;
    color: #222;
}
.dialog-win {
    display: flex;
    gap: 3px;
    margin-right: 1px;
    padding-top: 0;
}
.dlg-help, .dlg-close {
    width: 30px;
    height: 16px;
    border: 1px solid #58708a;
    border-radius: 2px;
    display: flex;
    align-items: center;
    justify-content: center;
}
.dlg-help {
    background: linear-gradient(#c9dcef, #94b2d0);
    font-weight: 600;
    line-height: 14px;
}
.dlg-close {
    background: linear-gradient(#d99a90, #b83a2c 50%, #a72d20);
    border-color: #6a2a22;
}
.dialog-body {
    flex: 1;
    position: relative;
    background-color: #f0f0f0;
    padding: 8px 7px 0;
    display: flex;
    flex-direction: column;
}
.dlg-toolbar {
    display: flex;
    align-items: center;
    height: 24px;
    flex: none;
}
.btn {
    height: 24px;
    flex: none;
    display: flex;
    align-items: center;
    justify-content: center;
    gap: 3px;
    border: 1px solid #6f6f6f;
    border-radius: 3px;
    background: linear-gradient(#f7f7f7, #ebebeb 50%, #d8d8d8);
    white-space: nowrap;
    font-size: 10.5px;
    color: #222;
}
.w-add { width: 100px; margin-right: 4px; }
.w-del { width: 97px; margin-right: 4px; }
.w-copy { width: 92px; }
.w-up { width: 23px; margin-right: 5px; }
.w-down { width: 22px; margin-right: 5px; }
.w-opt { width: 74px; margin-right: 11px; }
.tool-sep {
    width: 2px;
    height: 24px;
    flex: none;
    margin: 0 3px 0 2px;
    background-color: #333;
}
.btn.is-off {
    border-color: #b5b5b5;
    background: #f2f2f2;
}
.tri-up {
    border-left: 6px solid transparent;
    border-right: 6px solid transparent;
    border-bottom: 6px solid #111;
}
.tri-down {
    border-left: 6px solid transparent;
    border-right: 6px solid transparent;
    border-top: 6px solid #9a9a9a;
}
.has-head {
    display: flex;
    align-items: center;
    gap: 5px;
    white-space: nowrap;
    color: #222;
    letter-spacing: -.15px;
}
.check {
    width: 13px;
    height: 13px;
    display: flex;
    align-items: center;
    justify-content: center;
    border: 1px solid #555;
    background: linear-gradient(135deg, #e2e5ea, #fff);
}
.levels {
    height: 168px;
    flex: none;
    margin: 4px 0 0 -1px;
    width: 610px;
    background-color: #fff;
    border: 1px solid #444;
    padding: 0;
}
.levels-head {
    height: 22px;
    display: grid;
    grid-template-columns: 204px 206px 1fr;
    background: linear-gradient(#fff, #f2f3f5);
    line-height: 23px;
    color: #222;
}
.levels-head div {
    padding-left: 5px;
    border-right: 1px solid #e4e4e4;
}
.level {
    height: 23px;
    display: grid;
    grid-template-columns: 61px 124px 196px 194px;
    column-gap: 10.5px;
    align-items: start;
}
.level.is-selected {
    background-color: #d6d9dd;
    height: 22px;
}
.level-label {
    padding: 1px 0 0 3px;
    white-space: nowrap;
    color: #222;
    line-height: 13px;
    letter-spacing: -.2px;
}
.combo {
    height: 21px;
    position: relative;
    display: flex;
    align-items: center;
    justify-content: space-between;
    background-color: #fff;
    border: 1px solid #8e8e8e;
    padding: 0 2px 0 5px;
    color: #222;
}
.combo.is-tight {
    padding-left: 3px;
}
.combo-text {
    margin-bottom: 2px;
}
.combo-btn {
    width: 16px;
    height: 16px;
    display: flex;
    align-items: center;
    justify-content: center;
    border: 1px solid #333;
    background: linear-gradient(#f8f8f8, #d6d6d6);
}
.combo-btn.is-hover {
    background: linear-gradient(#e8f6fd, #a8d8ee);
}
.combo-list {
    position: absolute;
    left: -1px;
    top: 21px;
    width: 124px;
    height: 66px;
    background-color: #fff;
    border: 1px solid #111;
    z-index: 2;
    color: #111;
    font-size: 10.5px;
    line-height: 13px;
    padding-left: 1px;
}
.combo-list .is-focus {
    outline: 1px dotted #333;
    outline-offset: -1px;
}
.dlg-actions {
    display: flex;
    justify-content: flex-end;
    gap: 13px;
    margin: 5px 1px 0 0;
}
.btn-action {
    width: 71px;
    height: 20px;
}
.btn-action.is-default {
    border-color: #2f7f9e;
    outline: 1px solid #6fb6d2;
    outline-offset: -2px;
}
.size-grip {
    position: absolute;
    right: -5px;
    bottom: -4px;
}

/* Pointer and watermark sit over everything */
.pointer {
    position: absolute;
    left: 602px;
    top: 213px;
    z-index: 3;
}
.watermark {
    position: absolute;
    left: 1122px;
    top: 654px;
    z-index: 3;
    color: #f4f4f4;
    font-family: Lato, sans-serif;
    text-shadow: 0 0 2px #222, 1px 1px 2px #222;
    white-space: nowrap;
    opacity: .92;
    letter-spacing: .6px;
}
.watermark b {
    font-weight: 900;
}
.wm-top {
    font-size: 19px;
    line-height: 20px;
}
.wm-bottom {
    font-size: 16px;
    line-height: 17px;
}
```
